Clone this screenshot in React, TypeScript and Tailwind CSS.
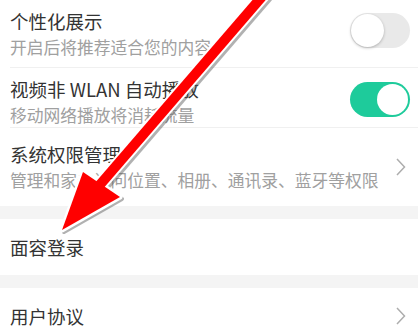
import React from "react";

const font = { fontFamily: '"Noto Sans CJK SC", "Noto Sans", sans-serif' };

function Chevron() {
  return (
    <svg width="12" height="20" viewBox="0 0 12 20" className="shrink-0">
      <polyline points="2,2 9.5,10 2,18" fill="none" stroke="#adadad" strokeWidth="1.5" strokeLinejoin="miter" />
    </svg>
  );
}

function Toggle({ on }: { on: boolean }) {
  return on ? (
    <div className="w-[60px] h-[35px] rounded-full bg-[#1ecb9b] flex items-center justify-end pr-[2px] shrink-0">
      <div className="w-[31px] h-[31px] rounded-full bg-white" />
    </div>
  ) : (
    <div className="w-[60px] h-[35px] rounded-full bg-[#e9e9e9] flex items-center justify-start pl-[1px] shrink-0">
      <div className="w-[33px] h-[33px] rounded-full bg-white shadow-[0_1px_3px_rgba(0,0,0,0.25)]" />
    </div>
  );
}

export default function App() {
  return (
    <div className="relative w-[418px] h-[329px] overflow-hidden bg-white" style={font}>
      {/* Row 1 */}
      <div className="h-[67px] flex items-center pl-[10px] pr-[8px]">
        <div className="flex-1 flex flex-col">
          <div className="text-[18.5px] leading-[26px] text-[#333333]">个性化展示</div>
          <div className="text-[16.75px] leading-[26px] text-[#a0a0a0]">开启后将推荐适合您的内容</div>
        </div>
        <div className="self-start mt-[13px]">
          <Toggle on={false} />
        </div>
      </div>
      <div className="ml-[10px] h-px bg-[#f0f0f0]" />
      {/* Row 2 */}
      <div className="h-[59px] flex items-start pl-[10px] pr-[8px]">
        <div className="flex-1 flex flex-col pt-[8px]">
          <div className="text-[18.5px] leading-[26px] text-[#333333]">视频非 WLAN 自动播放</div>
          <div className="text-[16.75px] leading-[26px] text-[#a0a0a0]">移动网络播放将消耗流量</div>
        </div>
        <div className="mt-[14px]">
          <Toggle on={true} />
        </div>
      </div>
      <div className="ml-[10px] h-px bg-[#f0f0f0]" />
      {/* Row 3 */}
      <div className="h-[78px] flex items-center pl-[10px] pr-[11px]">
        <div className="flex-1 flex flex-col">
          <div className="text-[18.5px] leading-[26px] text-[#333333]">系统权限管理</div>
          <div className="text-[16.75px] leading-[26px] text-[#a0a0a0]">管理和家亲访问位置、相册、通讯录、蓝牙等权限</div>
        </div>
        <Chevron />
      </div>
      <div className="h-[13px] bg-[#f4f4f4]" />
      {/* Row 4 */}
      <div className="h-[56px] flex items-center pl-[10px] pr-[11px]">
        <div className="flex-1 text-[18.5px] leading-[26px] text-[#333333]">面容登录</div>
      </div>
      <div className="h-[13px] bg-[#f4f4f4]" />
      {/* Row 5 */}
      <div className="h-[56px] flex items-center pl-[10px] pr-[11px]">
        <div className="flex-1 text-[18.5px] leading-[26px] text-[#333333]">用户协议</div>
        <Chevron />
      </div>

      {/* Red arrow annotation */}
      <svg className="absolute inset-0 pointer-events-none" width="418" height="329" viewBox="0 0 418 329">
        <g transform="translate(2,2)" opacity="0.45">
          <line x1="266" y1="-8" x2="98" y2="187" stroke="#555" strokeWidth="14" />
          <polygon points="62,230 83,172 120,197" fill="#555" stroke="#555" strokeWidth="4" strokeLinejoin="round" />
        </g>
        <line x1="266" y1="-8" x2="98" y2="187" stroke="#ffffff" strokeWidth="14" />
        <polygon points="62,230 83,172 120,197" fill="#ffffff" stroke="#ffffff" strokeWidth="5" strokeLinejoin="round" />
        <line x1="266" y1="-8" x2="98" y2="187" stroke="#ff0000" strokeWidth="10" />
        <polygon points="62,230 83,172 120,197" fill="#ff0000" />
      </svg>
    </div>
  );
}
